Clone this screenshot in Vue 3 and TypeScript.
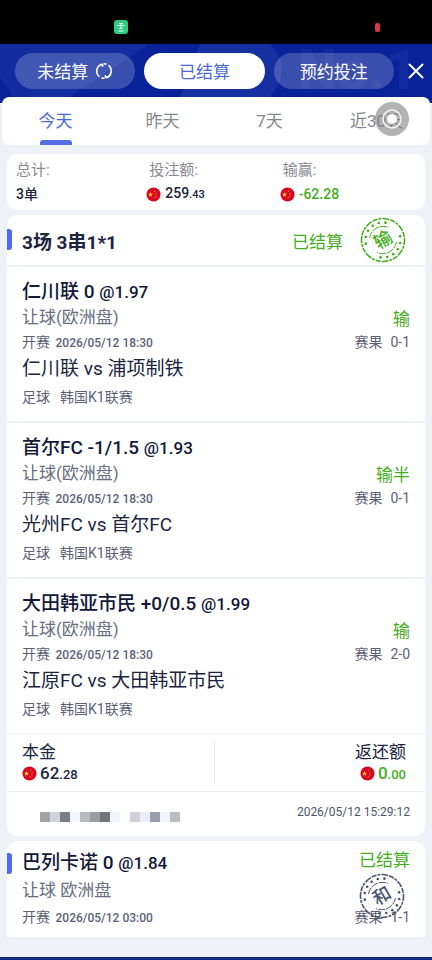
<script setup lang="ts">
import { defineComponent, h, ref } from 'vue'

interface Leg {
  pick: string
  odds: string
  outcome: string
  score: string
  teams: string
}

const Flag = defineComponent({
  render: () =>
    h('svg', { viewBox: '0 0 16 16', width: 15, height: 15, 'aria-hidden': 'true' }, [
      h('circle', { cx: 8, cy: 8, r: 7.5, fill: '#d80620' }),
      h('path', {
        d: 'M4.8 5.2l.8 1.9 2 .1-1.6 1.3.6 2-1.8-1.1L3 10.5l.6-2L2 7.200l2-.1z',
        fill: '#ffc52e',
      }),
      h('path', {
        d: 'M8.500 4.200h1.200v1.200H8.500zM10.200 6.400h1.200v1.200h-1.200zM10 9h1.200v1.200H10zM8.300 10.800h1.200V12H8.300z',
        fill: '#f79a2c',
      }),
    ]),
})

const Stamp = defineComponent({
  props: { label: { type: String, required: true } },
  setup: (props) => {
    const stars = [168, 190, 212, 234, 256, 278, -12, 10, 32, 54, 76, 98].map((deg) => {
      const a = (deg * Math.PI) / 180
      return { x: 24 + 17.5 * Math.cos(a), y: 24 + 17.5 * Math.sin(a) }
    })
    return () =>
      h('svg', { viewBox: '0 0 48 48', width: 48, height: 48, fill: 'none', stroke: 'currentColor' }, [
        h('circle', { cx: 24, cy: 24, r: 21.5, 'stroke-width': 1.6, 'stroke-dasharray': '5 1 3 1 7 1' }),
        h('path', { d: 'M10.500 22A14 14 0 0 1 30 11.500M37.500 26A14 14 0 0 1 18 36.500', 'stroke-width': 1, 'stroke-dasharray': '7 1' }),
        ...stars.map((s) =>
          h('circle', { cx: s.x, cy: s.y, r: 1.3, fill: 'currentColor', stroke: 'none' }),
        ),
        h(
          'text',
          {
            x: 24,
            y: 30,
            'text-anchor': 'middle',
            'font-size': 18,
            'font-weight': 500,
            fill: 'currentColor',
            stroke: 'none',
            transform: 'rotate(-30 24 24)',
          },
          props.label,
        ),
      ])
  },
})

const days = ['今天', '昨天', '7天', '近30天']
const activeDay = ref('今天')

const legs: Leg[] = [
  { pick: '仁川联 0', odds: '1.97', outcome: '输', score: '0-1', teams: '仁川联 vs 浦项制铁' },
  { pick: '首尔FC -1/1.5', odds: '1.93', outcome: '输半', score: '0-1', teams: '光州FC vs 首尔FC' },
  { pick: '大田韩亚市民 +0/0.5', odds: '1.99', outcome: '输', score: '2-0', teams: '江原FC vs 大田韩亚市民' },
]

const mosaic = [
  '#a3a4a8', '#d2d4dc', '#7b7c86', '#f3f7ff', '#b9bac0', '#9c9da0', '#75767c',
  '#f3f5fc', '#ffffff', '#cfd0d8', '#e9eefc', '#9c9fa9', '#f0f4ff', '#bbbcbe',
]
</script>

<template>
  <div class="page">
    <div class="status">
      <svg class="status-app" viewBox="0 0 14 14" width="14" height="14" aria-hidden="true">
        <rect width="14" height="14" rx="3" fill="#2fcb80" />
        <path d="M5 3.500h4M3.500 5.500h7M7 3v5M5 8.500h4M4.500 11h5" stroke="#e6fff2" stroke-width="1.200" />
      </svg>
      <span class="status-rec"></span>
    </div>

    <header class="top">
      <svg class="rays" viewBox="0 0 432 53" preserveAspectRatio="none" aria-hidden="true">
        <path d="M0 0h150L70 53H12Q8 42 0 34z" fill="#112da0" />
        <path d="M200 0h70q24 24 0 53h-90z" fill="#1430a1" />
      </svg>
      <span class="mark" aria-hidden="true">No.1</span>
      <nav class="pills">
        <button class="pill" type="button">
          未结算
          <svg viewBox="0 0 18 18" width="18" height="18" fill="none" stroke="currentColor" stroke-width="1.600" aria-hidden="true">
            <path d="M4.500 14.700A7.200 7.200 0 0 1 6.800 2.200M11.200 15.800A7.200 7.200 0 0 0 13.500 3.300" />
            <path d="M5 2.300h3v2.500zM13 15.700h-3v-2.500z" fill="currentColor" stroke-width=".8" />
            <path d="M8.500 1.800q1.500-.2 3 .5M9.500 16.200q-1.500.2-3-.5" />
          </svg>
        </button>
        <button class="pill on" type="button">已结算</button>
        <button class="pill" type="button">预约投注</button>
      </nav>
      <button class="close" type="button" aria-label="关闭">
        <svg viewBox="0 0 16 16" width="16" height="16" stroke="#fff" stroke-width="2" stroke-linecap="round">
          <path d="M1.500 1.500l13 13M14.500 1.500l-13 13" />
        </svg>
      </button>
    </header>

    <div class="days-wrap">
      <nav class="days">
        <button
          v-for="day in days"
          :key="day"
          type="button"
          class="day"
          :class="{ active: day === activeDay }"
          @click="activeDay = day"
        >{{ day }}</button>
        <svg class="float" viewBox="0 0 34 34" width="34" height="34" aria-hidden="true">
          <circle cx="17" cy="17" r="17" fill="#808080" fill-opacity=".6" />
          <circle cx="17" cy="17" r="9" fill="none" stroke="#f4f4f4" stroke-width="1.500" />
          <circle cx="17" cy="17" r="5" fill="#fff" />
        </svg>
      </nav>
    </div>

    <main class="list">
      <section class="card summary">
        <div>
          <p class="key">总计:</p>
          <p class="val">3单</p>
        </div>
        <div>
          <p class="key">投注额:</p>
          <p class="val shift"><Flag /><span>259<small>.43</small></span></p>
        </div>
        <div>
          <p class="key">输赢:</p>
          <p class="val shift green"><Flag />-62.28</p>
        </div>
      </section>

      <article class="card">
        <header class="head marked">
          <h2>3场 3串1*1</h2>
          <span class="state">已结算</span>
          <Stamp class="green" label="输" />
        </header>
        <section v-for="leg in legs" :key="leg.pick" class="leg">
          <h3 class="pick">{{ leg.pick }} <span>@{{ leg.odds }}</span></h3>
          <p class="row market"><span>让球(欧洲盘)</span><span class="outcome">{{ leg.outcome }}</span></p>
          <p class="row time">
            <span>开赛 <span class="date">2026/05/12 18:30</span></span>
            <span class="score"><span>赛果</span><span>{{ leg.score }}</span></span>
          </p>
          <p class="teams">{{ leg.teams }}</p>
          <p class="league"><span>足球</span><span>韩国K1联赛</span></p>
        </section>
        <div class="money">
          <div class="stake">
            <p>本金</p>
            <p class="sum"><Flag /><span>62<small>.28</small></span></p>
          </div>
          <div class="payout">
            <p>返还额</p>
            <p class="sum green"><Flag /><span>0<small>.00</small></span></p>
          </div>
        </div>
        <footer class="foot">
          <svg viewBox="0 0 140 10" width="140" height="10" shape-rendering="crispEdges" aria-hidden="true">
            <rect v-for="(c, i) in mosaic" :key="i" :x="i * 10" y="0" width="10" height="10" :fill="c" />
          </svg>
          <time>2026/05/12 15:29:12</time>
        </footer>
      </article>

      <article class="card single marked">
        <div class="row">
          <h3 class="pick">巴列卡诺 0 <span>@1.84</span></h3>
          <span class="state">已结算</span>
        </div>
        <p class="market">让球 欧洲盘</p>
        <p class="row time">
          <span>开赛 <span class="date">2026/05/12 03:00</span></span>
          <span class="score"><span>赛果</span><span>1-1</span></span>
        </p>
        <Stamp class="over" label="和" />
      </article>
    </main>
    <div class="base"></div>
  </div>
</template>

<style>
body {
  margin: 0;
  background: #eef2f6;
}
</style>

<style scoped>
.page {
  min-height: 100vh;
  display: flex;
  flex-direction: column;
  background: #eef2f6;
  color: #20243f;
  font-family: Roboto, 'Noto Sans CJK SC', sans-serif;
  font-size: 17px;
}
p,
h2,
h3 {
  margin: 0;
}
button {
  border: 0;
  padding: 0;
  background: none;
  font: inherit;
}
svg {
  display: block;
  flex: none;
}
.status {
  height: 44px;
  background: #000;
  display: flex;
  align-items: center;
  justify-content: space-between;
  padding: 10px 52px 0 114px;
  box-sizing: border-box;
}
.status-rec {
  width: 5px;
  height: 9px;
  border-radius: 2px;
  background: #e0324b;
}
.top {
  position: relative;
  overflow: hidden;
  height: 53px;
  box-sizing: border-box;
  padding: 0 8px 0 15px;
  display: flex;
  align-items: center;
  gap: 14px;
  background: #082299;
}
.rays {
  position: absolute;
  inset: 0;
  width: 100%;
  height: 100%;
}
.mark {
  position: absolute;
  right: 14px;
  top: 0;
  font-size: 56px;
  line-height: 53px;
  font-weight: 900;
  color: rgba(255, 255, 255, 0.04);
}
.pills {
  position: relative;
  flex: 1;
  display: flex;
  gap: 9px;
}
.pill {
  flex: 1;
  height: 36px;
  border-radius: 18px;
  display: flex;
  align-items: center;
  justify-content: center;
  gap: 7px;
  color: #fff;
  background: rgba(255, 255, 255, 0.2);
}
.pill.on {
  background: #fff;
  color: #4a68dc;
}
.close {
  position: relative;
}
.days-wrap {
  padding: 0 2px;
  background: linear-gradient(#082299 6px, transparent 6px);
}
.days {
  position: relative;
  display: grid;
  grid-template-columns: repeat(4, 1fr);
  height: 48px;
  border-radius: 7px;
  background: #fff;
}
.day {
  display: flex;
  flex-direction: column;
  align-items: center;
  line-height: 48px;
  color: #85878d;
}
.day.active {
  color: #4a68dc;
}
.day.active::after {
  content: '';
  width: 32px;
  height: 5px;
  margin-top: -5px;
  border-radius: 3px 3px 0 0;
  background: #5570e6;
}
.float {
  position: absolute;
  right: 21px;
  top: 5px;
}
.list {
  display: flex;
  flex-direction: column;
  gap: 5px;
  padding: 9px 7px 0;
}
.card {
  position: relative;
  border-radius: 10px;
  background: #fff;
}
.summary {
  display: grid;
  grid-template-columns: repeat(3, 1fr);
  padding: 4px 9px;
}
.key {
  font-size: 15px;
  line-height: 24px;
  color: #898b91;
}
.val {
  display: flex;
  align-items: center;
  gap: 4px;
  height: 24px;
  font-size: 14px;
  line-height: 24px;
  font-weight: 500;
}
.val.shift {
  margin-left: -3px;
}
.val small {
  font-size: 11px;
}
.green,
.outcome,
.state {
  color: #43ae1c;
}
.marked::before {
  content: '';
  position: absolute;
  left: 0;
  top: 14px;
  width: 5px;
  height: 21px;
  border-radius: 0 3px 3px 0;
  background: #4d6cf0;
}
.head {
  display: flex;
  align-items: center;
  height: 50px;
  padding: 0 18px 0 15px;
  border-bottom: 2px solid #eef1f4;
}
.head h2 {
  flex: 1;
  font-size: 19px;
  font-weight: 700;
}
.head .state {
  margin-right: 16px;
}
.leg {
  padding: 12px 15px 9px;
  border-bottom: 2px solid #eef1f4;
}
.leg:nth-of-type(3) {
  border-bottom: 2px dotted #f1f3f6;
}
.row {
  display: flex;
  justify-content: space-between;
}
.pick {
  font-size: 19px;
  line-height: 26px;
  font-weight: 500;
  color: #14183a;
}
.pick span {
  font-size: 17px;
}
.market {
  line-height: 24px;
  font-size: 17px;
  color: #6a6e80;
}
.market .outcome {
  padding-top: 4px;
  line-height: 20px;
}
.time {
  font-size: 14px;
  line-height: 26px;
  color: #5d6176;
}
.date {
  margin-left: 2px;
  font-size: 12px;
  font-weight: 500;
}
.score {
  display: flex;
  gap: 8px;
}
.teams {
  font-size: 19px;
  line-height: 26px;
}
.league {
  display: flex;
  gap: 10px;
  font-size: 14px;
  line-height: 30px;
  color: #5d6176;
}
.money {
  display: flex;
  padding: 7px 0;
  border-bottom: 1px solid #e9ecf0;
  line-height: 21px;
}
.money > div {
  flex: 1;
}
.stake {
  padding-left: 15px;
  box-sizing: border-box;
  border-right: 1px solid #e4e8f3;
}
.payout {
  display: flex;
  flex-direction: column;
  align-items: flex-end;
  box-sizing: border-box;
  padding-right: 19px;
}
.sum {
  display: flex;
  align-items: center;
  gap: 3px;
  height: 21px;
  font-size: 17px;
  font-weight: 500;
}
.sum small {
  font-size: 13px;
}
.foot {
  display: flex;
  align-items: center;
  justify-content: space-between;
  height: 44px;
  padding: 0 15px 0 33px;
  font-size: 12px;
  color: #50546a;
}
.foot svg {
  margin-top: 6px;
}
.foot time {
  margin-bottom: 4px;
}
.single {
  border-radius: 10px 10px 0 0;
  padding: 9px 15px 6px;
}
.single::before {
  top: 12px;
}
.single .state {
  line-height: 20px;
}
.single .market {
  line-height: 28px;
}
.over {
  position: absolute;
  right: 19px;
  top: 31px;
  color: #4b5170;
}
.base {
  margin-top: auto;
  height: 3px;
  background: #102c80;
}
</style>
